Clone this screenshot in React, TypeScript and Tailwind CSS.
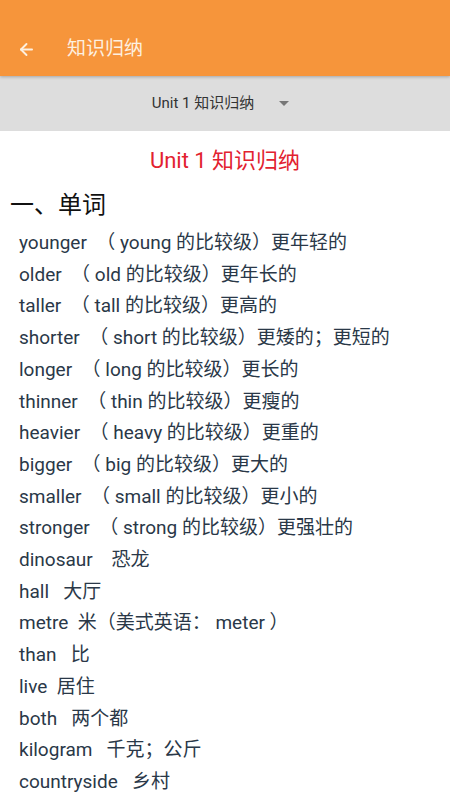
import { ArrowLeft } from 'lucide-react'

const words: string[] = [
  'younger  （ young 的比较级）更年轻的',
  'older  （ old 的比较级）更年长的',
  'taller  （ tall 的比较级）更高的',
  'shorter  （ short 的比较级）更矮的；更短的',
  'longer  （ long 的比较级）更长的',
  'thinner  （ thin 的比较级）更瘦的',
  'heavier  （ heavy 的比较级）更重的',
  'bigger  （ big 的比较级）更大的',
  'smaller  （ small 的比较级）更小的',
  'stronger  （ strong 的比较级）更强壮的',
  'dinosaur    恐龙',
  'hall   大厅',
  'metre  米（美式英语： meter ）',
  'than   比',
  'live  居住',
  'both   两个都',
  'kilogram   千克；公斤',
  'countryside   乡村',
]

const font = "font-['Roboto','Noto_Sans_CJK_SC',sans-serif]"

export default function App() {
  return (
    <div className={`w-[450px] h-[800px] overflow-hidden bg-white ${font}`}>
      <header className="h-[76px] bg-[#f6953b] flex items-center pt-[22px] shadow-[0_1px_3px_rgba(0,0,0,0.25)] relative z-10">
        <ArrowLeft className="ml-[17px] w-[19px] h-[19px] text-[#fdf0e0]" strokeWidth={2.4} />
        <span className="ml-[31px] text-[19px] text-[#fdf0e0]">知识归纳</span>
      </header>

      <div className="h-[55px] bg-[#dddddd] flex items-center justify-center pr-[9px]">
        <span className="text-[15px] text-[#333333]">Unit 1 知识归纳</span>
        <span className="ml-[25px] w-0 h-0 border-l-[5px] border-r-[5px] border-t-[5px] border-l-transparent border-r-transparent border-t-[#777777]" />
      </div>

      <h1 className="mt-[15px] text-center text-[22px] leading-[30px] text-[#e2222f]">Unit 1 知识归纳</h1>

      <h2 className="mt-[12px] ml-[10px] text-[24px] leading-[34px] text-[#111111]">一、单词</h2>

      <ul className="mt-[5px] pl-[19px]">
        {words.map((w) => (
          <li key={w} className="whitespace-pre text-[19px] leading-[31.7px] text-[#2a3848]">
            {w}
          </li>
        ))}
      </ul>
    </div>
  )
}
